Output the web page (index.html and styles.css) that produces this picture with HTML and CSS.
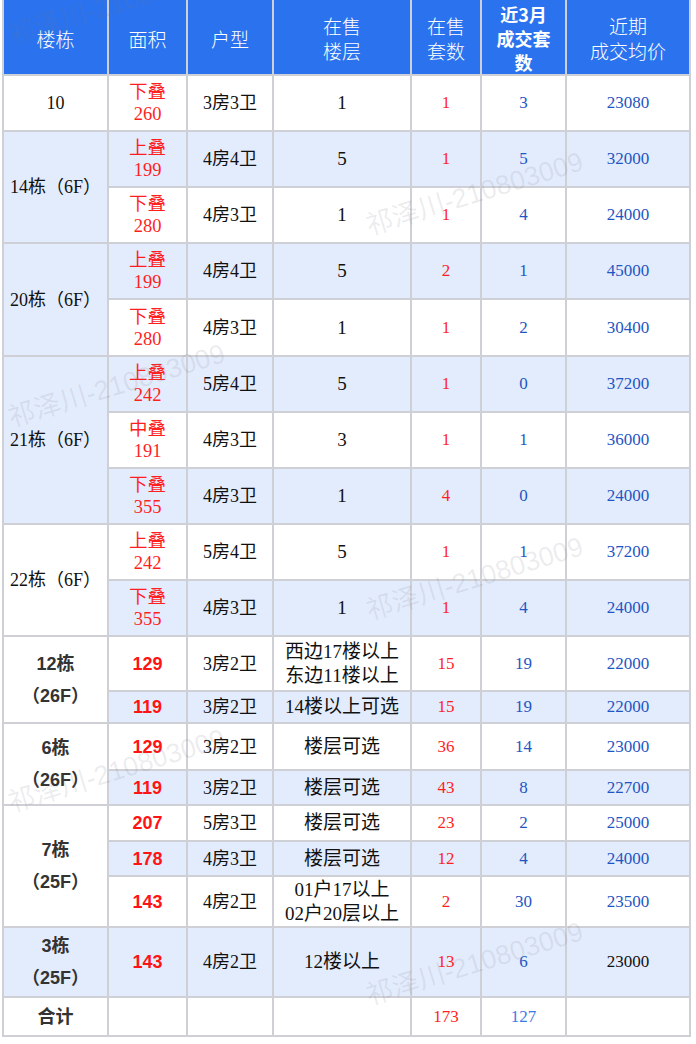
FILE: index.html
```html
<!DOCTYPE html>
<html lang="zh-CN">
<head>
<meta charset="utf-8">
<title>在售楼栋</title>
<link rel="stylesheet" href="styles.css">
</head>
<body>
<div class="sheet">
<table class="grid">
<colgroup>
<col class="c1"><col class="c2"><col class="c3"><col class="c4"><col class="c5"><col class="c6"><col class="c7">
</colgroup>
<thead>
<tr class="head">
<th>楼栋</th><th>面积</th><th>户型</th><th>在售<br>楼层</th><th>在售<br>套数</th><th class="strong">近3月<br>成交套<br>数</th><th>近期<br>成交均价</th>
</tr>
</thead>
<tbody>
<tr class="h54"><td>10</td><td class="area">下叠<br>260</td><td>3房3卫</td><td class="floor">1</td><td class="red">1</td><td class="blue">3</td><td class="blue">23080</td></tr>
<tr class="h54"><td rowspan="2">14栋（6F）</td><td class="area">上叠<br>199</td><td>4房4卫</td><td class="floor">5</td><td class="red">1</td><td class="blue">5</td><td class="blue">32000</td></tr>
<tr class="h54"><td class="area">下叠<br>280</td><td>4房3卫</td><td class="floor">1</td><td class="red">1</td><td class="blue">4</td><td class="blue">24000</td></tr>
<tr class="h54"><td rowspan="2">20栋（6F）</td><td class="area">上叠<br>199</td><td>4房4卫</td><td class="floor">5</td><td class="red">2</td><td class="blue">1</td><td class="blue">45000</td></tr>
<tr class="h55"><td class="area">下叠<br>280</td><td>4房3卫</td><td class="floor">1</td><td class="red">1</td><td class="blue">2</td><td class="blue">30400</td></tr>
<tr class="h54"><td rowspan="3">21栋（6F）</td><td class="area">上叠<br>242</td><td>5房4卫</td><td class="floor">5</td><td class="red">1</td><td class="blue">0</td><td class="blue">37200</td></tr>
<tr class="h54"><td class="area">中叠<br>191</td><td>4房3卫</td><td class="floor">3</td><td class="red">1</td><td class="blue">1</td><td class="blue">36000</td></tr>
<tr class="h54"><td class="area">下叠<br>355</td><td>4房3卫</td><td class="floor">1</td><td class="red">4</td><td class="blue">0</td><td class="blue">24000</td></tr>
<tr class="h54"><td rowspan="2">22栋（6F）</td><td class="area">上叠<br>242</td><td>5房4卫</td><td class="floor">5</td><td class="red">1</td><td class="blue">1</td><td class="blue">37200</td></tr>
<tr class="h54"><td class="area">下叠<br>355</td><td>4房3卫</td><td class="floor">1</td><td class="red">1</td><td class="blue">4</td><td class="blue">24000</td></tr>
<tr class="h53"><td rowspan="2" class="bldg">12栋<br>（26F）</td><td class="big">129</td><td>3房2卫</td><td class="floor">西边17楼以上<br>东边11楼以上</td><td class="red">15</td><td class="blue">19</td><td class="blue">22000</td></tr>
<tr class="h30"><td class="big">119</td><td>3房2卫</td><td class="floor">14楼以上可选</td><td class="red">15</td><td class="blue">19</td><td class="blue">22000</td></tr>
<tr class="h45"><td rowspan="2" class="bldg">6栋<br>（26F）</td><td class="big">129</td><td>3房2卫</td><td class="floor">楼层可选</td><td class="red">36</td><td class="blue">14</td><td class="blue">23000</td></tr>
<tr class="h33"><td class="big">119</td><td>3房2卫</td><td class="floor">楼层可选</td><td class="red">43</td><td class="blue">8</td><td class="blue">22700</td></tr>
<tr class="h34"><td rowspan="3" class="bldg">7栋<br>（25F）</td><td class="big">207</td><td>5房3卫</td><td class="floor">楼层可选</td><td class="red">23</td><td class="blue">2</td><td class="blue">25000</td></tr>
<tr class="h33"><td class="big">178</td><td>4房3卫</td><td class="floor">楼层可选</td><td class="red">12</td><td class="blue">4</td><td class="blue">24000</td></tr>
<tr class="h49"><td class="big">143</td><td>4房2卫</td><td class="floor">01户17以上<br>02户20层以上</td><td class="red">2</td><td class="blue">30</td><td class="blue">23500</td></tr>
<tr class="h68"><td class="bldg">3栋<br>（25F）</td><td class="big">143</td><td>4房2卫</td><td class="floor">12楼以上</td><td class="red">13</td><td class="blue">6</td><td class="plain">23000</td></tr>
<tr class="h37"><td class="bldg">合计</td><td></td><td></td><td></td><td class="red">173</td><td class="sky">127</td><td></td></tr>
</tbody>
</table>
<div class="marks" aria-hidden="true">
<span class="mark m1">祁泽川-210803009</span>
<span class="mark m2">祁泽川-210803009</span>
<span class="mark m3">祁泽川-210803009</span>
<span class="mark m4">祁泽川-210803009</span>
<span class="mark m5">祁泽川-210803009</span>
<span class="mark m6">祁泽川-210803009</span>
</div>
</div>
</body>
</html>
```

FILE: styles.css
```css
* { box-sizing: border-box; }
html, body { margin: 0; padding: 0; background: #fff; }
body {
  font-family: "Liberation Serif", "Noto Sans CJK SC", serif;
  color: #111;
  overflow: hidden;
}
.sheet {
  position: relative;
  width: 696px;
  height: 1044px;
  overflow: hidden;
}
.grid {
  margin: -2px 0 0 2px;
  border-collapse: separate;
  border-spacing: 2px;
  background: #cfd0d5;
  table-layout: fixed;
  width: 689px;
}
.c1 { width: 103px; }
.c2 { width: 77px; }
.c3 { width: 84px; }
.c4 { width: 136px; }
.c5 { width: 68px; }
.c6 { width: 83px; }
.c7 { width: 122px; }

.head { height: 74px; }
.grid th {
  padding: 2px 0 0;
  background: #2b73ee;
  color: #fff;
  font-family: "Noto Sans CJK SC", sans-serif;
  font-weight: 300;
  font-size: 19px;
  line-height: 25px;
  text-align: center;
  vertical-align: middle;
}
.grid th.strong { font-weight: 700; font-size: 18px; line-height: 24px; padding-top: 1px; }

.grid td {
  padding: 0;
  background: #fff;
  text-align: center;
  vertical-align: middle;
  font-size: 18px;
  line-height: 22px;
  color: #111;
}
.grid tbody tr:nth-child(even) > td { background: #e3ecfd; }

.h30 { height: 30px; }
.h33 { height: 33px; }
.h34 { height: 34px; }
.h37 { height: 37px; }
.h45 { height: 45px; }
.h49 { height: 49px; }
.h53 { height: 53px; }
.h54 { height: 54px; }
.h55 { height: 55px; }
.h68 { height: 68px; }

.grid td.area { color: #ff1f1f; font-size: 18.5px; }
.grid td.red { color: #ff1f1f; font-size: 17px; }
.grid td.blue { color: #1f56c3; font-size: 17px; }
.grid td.plain { font-size: 17px; }
.grid td.sky { color: #3b7be6; font-size: 17px; }
.grid td.floor { font-size: 19px; line-height: 24px; }
.grid td.big {
  font-family: "Liberation Sans", "Noto Sans CJK SC", sans-serif;
  font-weight: 700;
  font-size: 18px;
  color: #ff1414;
}
.grid td.bldg {
  font-family: "Liberation Sans", "Noto Sans CJK SC", sans-serif;
  font-weight: 700;
  font-size: 18px;
  line-height: 32px;
  color: #333;
}

.marks {
  position: absolute;
  inset: 0;
  pointer-events: none;
}
.mark {
  position: absolute;
  font-family: "Liberation Sans", "Noto Sans CJK SC", sans-serif;
  font-size: 27px;
  line-height: 28px;
  height: 28px;
  white-space: nowrap;
  color: rgba(110, 110, 120, 0.13);
  transform-origin: 0 100%;
  transform: rotate(-17deg);
}
.m1 { left: 13px; top: 22px; }
.m2 { left: 371px; top: 212px; }
.m3 { left: 13px; top: 404px; }
.m4 { left: 371px; top: 597px; }
.m5 { left: 13px; top: 789px; }
.m6 { left: 371px; top: 982px; }
```
